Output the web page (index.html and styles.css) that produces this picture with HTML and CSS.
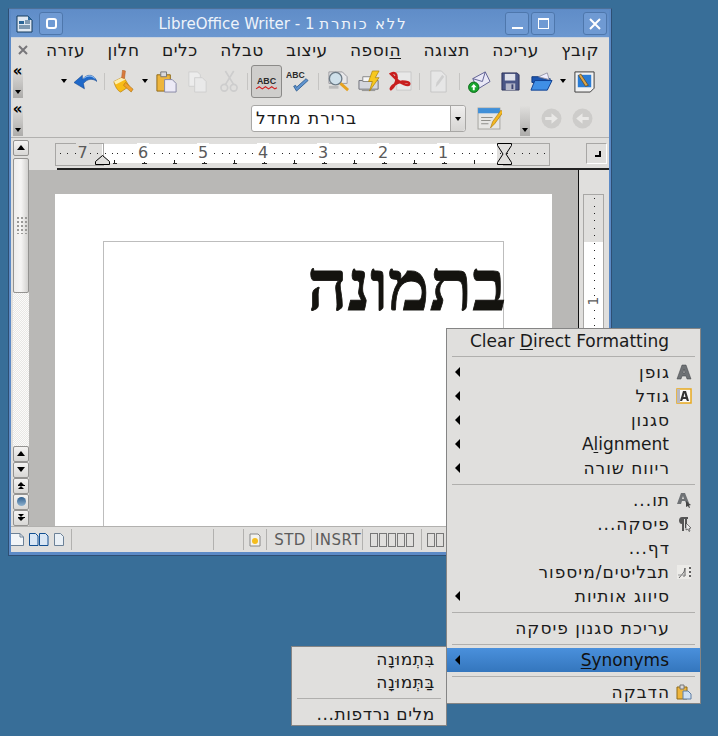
FILE: index.html
```html
<!DOCTYPE html>
<html lang="he">
<head>
  <meta charset="UTF-8" />
  <title>LibreOffice Writer</title>
  <link rel="stylesheet" href="styles.css">
</head>
<body>

<div class="window">
  <div class="titlebar">
    <svg class="app-icon" viewBox="0 0 17 18"><path d="M1 1h11l4 4v12H1z" fill="#dfe8f2" stroke="#143a5c"/><path d="M12 1l4 4h-4z" fill="#2d6a9f"/><path d="M3 6h5v3H3z" fill="#2a6597"/><path d="M9 6h5M3 11h11M3 13h11M9 8h5" stroke="#1f4a70"/></svg>
    <div class="tbtn tbtn-menu"><span class="ring"></span></div>
    <div class="title" dir="rtl"><span class="title-he">ללא כותרת</span> 1 - LibreOffice Writer</div>
    <div class="tbtn"><span class="min-glyph"></span></div>
    <div class="tbtn tbtn-max"><span class="max-glyph"></span></div>
    <div class="tbtn tbtn-close">
      <svg viewBox="0 0 12 12" width="12" height="12"><path d="M1 1l10 10M11 1L1 11" stroke="#fff" stroke-width="2"/></svg>
    </div>
  </div>

  <div class="body">
    <div class="menubar">
      <svg class="doc-close" viewBox="0 0 10 10" width="10" height="10"><path d="M1 1l8 8M9 1L1 9" stroke="#77767a" stroke-width="2"/></svg>
      <div class="menu-items" dir="rtl">
        <span>קובץ</span>
        <span>עריכה</span>
        <span>תצוגה</span>
        <span><u>ה</u>וספה</span>
        <span>עיצוב</span>
        <span>טבלה</span>
        <span>כלים</span>
        <span>חלון</span>
        <span>עזרה</span>
      </div>
    </div>

    <div class="toolbar">
      <div class="handle"><b>«</b><i></i></div>
      <div class="drop drop-first"></div>
      <div class="tool">
        <svg viewBox="0 0 22 18"><path d="M0 10L8 3v4C13 1 19 2 22 9c-4-3-9-3-13 2l1 5z" fill="#1f69c9" stroke="#0d3f8a" stroke-width=".5"/><path d="M9 6c4-3 8-3 11 0" fill="none" stroke="#8fbcf0"/></svg>
      </div>
      <div class="sep"></div>
      <div class="tool">
        <svg viewBox="0 0 22 24"><path d="M1 12l10-5 6 10-9 6c-3-1-6-6-7-11z" fill="#f8bc16" stroke="#b5790a" stroke-width=".7"/><path d="M1 12l10-5 2 3-10 5z" fill="#fdeeb0"/><path d="M10 0l3 1-1 8-3-1z" fill="#d97a3c" stroke="#a85a20" stroke-width=".5"/><path d="M13 13l8 7-2 3-8-7z" fill="#f2a02c" stroke="#a86f0a" stroke-width=".6"/></svg>
      </div>
      <div class="drop"></div>
      <div class="tool">
        <svg viewBox="0 0 22 24"><path d="M1 5h14v17H1z" fill="#eeb53c" stroke="#8f6a18"/><path d="M5 2h6v5H5z" fill="#d9d9dc" stroke="#777"/><path d="M9 10h8l4 4v9H9z" fill="#eceaf6" stroke="#8688a5"/></svg>
      </div>
      <div class="tool">
        <svg viewBox="0 0 22 24"><path d="M2 2h9l3 3v12H2z" fill="#ececec" stroke="#cfcfcf"/><path d="M8 8h8l4 4v11H8z" fill="#e9e9e9" stroke="#cfcfcf"/></svg>
      </div>
      <div class="tool">
        <svg viewBox="0 0 18 22"><path d="M14 1L6 14M6 1l8 13" stroke="#cdcdcd" stroke-width="1.600" fill="none"/><circle cx="5" cy="17" r="3.200" fill="none" stroke="#cdcdcd" stroke-width="1.600"/><circle cx="14" cy="17" r="3.200" fill="none" stroke="#cdcdcd" stroke-width="1.600"/></svg>
      </div>
      <div class="sep"></div>
      <div class="tool pressed">
        <svg viewBox="0 0 22 22"><text x="11" y="13" text-anchor="middle" class="abc-text">ABC</text><path d="M1 18l3-2 3 2 3-2 3 2 3-2 3 2 2-1" fill="none" stroke="#d32020"/></svg>
      </div>
      <div class="tool">
        <svg viewBox="0 0 24 24"><text x="0" y="8" class="abc-text abc-small">ABC</text><path d="M8 17l3 5L23 11l-2-2-10 9-1-2z" fill="#5f93cf" stroke="#1e5288" stroke-width=".8"/></svg>
      </div>
      <div class="sep sep-wide"></div>
      <div class="tool">
        <svg viewBox="0 0 24 24"><path d="M2 2h14l5 5v7H2z" fill="#e8e8ea" stroke="#9a9aa0"/><circle cx="9" cy="9" r="6.500" fill="#cfe0ea" stroke="#6d7b86" stroke-width="1.400"/><path d="M14 14l8 7" stroke="#e6a21f" stroke-width="3"/><path d="M2 18h10" stroke="#bbb" stroke-width="3"/></svg>
      </div>
      <div class="tool">
        <svg viewBox="0 0 24 24"><path d="M1 11h20v9H1z" fill="#d5d7de" stroke="#6f7078"/><path d="M5 7h10v5H5z" fill="#f6f6f6" stroke="#888"/><path d="M4 20h14v2H4z" fill="#999"/><path d="M15 1h7l-4 7h4L12 22l3-10h-4z" fill="#f7c81e" stroke="#a87c08" stroke-width=".7"/></svg>
      </div>
      <div class="tool">
        <svg viewBox="0 0 24 24"><path d="M8 2h15v19H8z" fill="#e8e8e8" stroke="#c8c8c8"/><path d="M2 4c4-2 6 0 6 4 0 5-3 10-6 12-1-1 4-7 12-8 4 0 8 1 7 3s-9-1-13-5C6 8 4 6 2 4z" fill="none" stroke="#c81e1e" stroke-width="2.600"/></svg>
      </div>
      <div class="sep"></div>
      <div class="tool">
        <svg viewBox="0 0 18 24"><path d="M1 1h11l5 5v17H1z" fill="#e6e6e6" stroke="#c6c6c6"/><path d="M6 18l1-5 6-8 2 2-6 8z" fill="#cfcfcf"/></svg>
      </div>
      <div class="sep sep-wide"></div>
      <div class="tool">
        <svg viewBox="0 0 24 24"><path d="M5 9L18 2l5 10-13 8z" fill="#e9e8f6" stroke="#5e5f92"/><path d="M5 9l10 3 3-10" fill="none" stroke="#5e5f92"/><circle cx="6" cy="18" r="5.400" fill="#18a52d" stroke="#0b6a19"/><path d="M6 14.500l3 3.500H7v3H5v-3H3z" fill="#fff"/></svg>
      </div>
      <div class="tool tool-save">
        <svg viewBox="0 0 20 20"><path d="M1 1h16l2 2v16H1z" fill="#4a5686" stroke="#2a3058"/><path d="M4 2h11v7H4z" fill="#dfe1ea"/><path d="M5 12h10v7H5z" fill="#b5b8c9"/><path d="M11 13h2v5h-2z" fill="#3c4470"/></svg>
      </div>
      <div class="tool">
        <svg viewBox="0 0 24 20"><path d="M2 5h8l2 2h9v4H2z" fill="#1c55b0" stroke="#103a80"/><path d="M9 5l9-4 2 7z" fill="#eef" stroke="#99a"/><path d="M1 19l4-10h18l-5 10z" fill="#3f8fe6" stroke="#103f90"/></svg>
      </div>
      <div class="drop"></div>
      <div class="tool">
        <svg viewBox="0 0 22 24"><path d="M1 2h20v17l-4 4H1z" fill="#f2f2f2" stroke="#3a3a3a"/><path d="M4 5h14v13H4z" fill="#2a7dd6"/><path d="M7 4l8 12-3 1-7-11z" fill="#d9a54b" stroke="#5e3f10" stroke-width=".7"/></svg>
      </div>
    </div>

    <div class="toolbar toolbar-second">
      <div class="handle"><b>«</b><i></i></div>
      <div class="combo">
        <div class="combo-text" dir="rtl">ברירת מחדל</div>
        <div class="combo-btn"></div>
      </div>
      <div class="tool tool-styles">
        <svg viewBox="0 0 24 24"><path d="M1 2h21v20H1z" fill="#e6e6e4" stroke="#a8a8a4"/><path d="M1 2h21v5H1z" fill="#3f8fd8"/><path d="M4 11h11M4 14h9M4 17h7" stroke="#8f8f8a"/><path d="M13 21l2-6 8-11 2 2-8 11z" fill="#f5b81f" stroke="#a0720a" stroke-width=".6"/></svg>
      </div>
      <div class="handle handle-plain"><i></i></div>
      <div class="tool tool-nav">
        <svg viewBox="0 0 20 20"><circle cx="10" cy="10" r="9.500" fill="#cdccca"/><path d="M4 8.500h6V5l6 5-6 5v-3.500H4z" fill="#e9e8e6"/></svg>
      </div>
      <div class="tool tool-nav">
        <svg viewBox="0 0 20 20"><circle cx="10" cy="10" r="9.500" fill="#cdccca"/><path d="M16 8.500h-6V5l-6 5 6 5v-3.500h6z" fill="#e9e8e6"/></svg>
      </div>
    </div>

    <div class="editor">
      <div class="vscroll">
        <div class="sbtn sbtn-top"><span class="up"></span></div>
        <div class="thumb"><span class="grip"></span></div>
        <div class="trough"></div>
        <div class="sbtn"><span class="up"></span></div>
        <div class="sbtn"><span class="down"></span></div>
        <div class="sbtn"><span class="up up-small"></span><span class="bar"></span><span class="up up-small"></span></div>
        <div class="sbtn"><span class="ball"></span></div>
        <div class="sbtn"><span class="down down-small"></span><span class="bar"></span><span class="down down-small"></span></div>
      </div>

      <div class="main">
        <div class="ruler-row">
          <div class="ruler">
            <div class="ruler-cell"><span class="ruler-num ruler-num-off">7</span></div>
            <div class="ruler-cell"><span class="ruler-num">6</span></div>
            <div class="ruler-cell"><span class="ruler-num">5</span></div>
            <div class="ruler-cell"><span class="ruler-num">4</span></div>
            <div class="ruler-cell"><span class="ruler-num">3</span></div>
            <div class="ruler-cell"><span class="ruler-num">2</span></div>
            <div class="ruler-cell"><span class="ruler-num">1</span></div>
            <div class="ruler-cell ruler-cell-end"></div>
            <svg class="tab-left" viewBox="0 0 15 10" width="15" height="10"><path d="M7.500.5l7 6v3H.5v-3z" fill="#e0dfdd" stroke="#000"/></svg>
            <svg class="tab-right" viewBox="0 0 15 22" width="15" height="22"><path d="M.5.5h14v2L9 11l5.500 8.500v2H.5v-2L6 11 .5 2.500z" fill="#e0dfdd" stroke="#000"/></svg>
          </div>
          <div class="corner"><span></span></div>
        </div>
        <div class="work-row">
          <div class="workspace">
            <div class="page">
              <div class="frame">
                <div class="doc-text" dir="rtl">בתמונה</div>
              </div>
            </div>
          </div>
          <div class="vruler-panel">
            <div class="vruler">
              <span class="vruler-num">1</span>
            </div>
          </div>
        </div>
      </div>
    </div>

    <div class="statusbar">
      <div class="st st-pages">
        <svg viewBox="0 0 13 13" width="13" height="13"><path d="M0 .5h9l3.500 3.500v8.500H0" fill="#f2f5f8" stroke="#6c8197"/><path d="M9 .5V4h3.500" fill="none" stroke="#6c8197"/></svg>
        <svg viewBox="0 0 20 13" width="20" height="13"><path d="M.5.5h6L9 3v9.500H.5zM10.500.5h6L19 3v9.500h-8.500z" fill="#d9e6f4" stroke="#124f91"/></svg>
        <svg viewBox="0 0 10 13" width="10" height="13"><path d="M.5.500h6L9.500 3.500v9H.5z" fill="#eaf0f6" stroke="#6c8197"/></svg>
      </div>
      <div class="st st-wide"></div>
      <div class="st st-30"></div>
      <div class="st st-23">
        <svg viewBox="0 0 12 14" width="12" height="14"><path d="M1 1h8l2 2v10H1z" fill="#f3f3f0" stroke="#888"/><circle cx="6" cy="8" r="3" fill="#f4bd1e"/></svg>
      </div>
      <div class="st st-std">STD</div>
      <div class="st st-insrt">INSRT</div>
      <div class="st st-tofu"><i></i><i></i><i></i><i></i><i></i></div>
      <div class="st st-last st-tofu"><i></i><i></i></div>
    </div>
  </div>
</div>

<div class="popup popup-main" dir="rtl">
  <div class="item item-first" dir="ltr"><span class="item-label">Clear <u>D</u>irect Formatting</span></div>
  <div class="rule"></div>
  <div class="item has-sub">
    <span class="item-icon"><svg viewBox="0 0 16 16"><path d="M6 1h4l5 14h-4l-1-3H6l-1 3H1zM8 5l-1 4h2z" fill="#6f7275" stroke="#3e4144" stroke-width=".5"/></svg></span>
    <span class="item-label">גופן</span>
  </div>
  <div class="item has-sub">
    <span class="item-icon"><svg viewBox="0 0 16 16"><path d="M1 1h14v14H1z" fill="#fafafa" stroke="#e8a91e" stroke-width="1.500"/><path d="M1 1h3v14H1z" fill="#b9b9c2"/><path d="M7 3h3l3 10h-2l-1-2H7l-1 2H4zM8.500 5L7.500 9h2z" fill="#333"/></svg></span>
    <span class="item-label">גודל</span>
  </div>
  <div class="item has-sub"><span class="item-icon"></span><span class="item-label">סגנון</span></div>
  <div class="item has-sub" dir="ltr"><span class="item-label">A<u>l</u>ignment</span></div>
  <div class="item has-sub"><span class="item-icon"></span><span class="item-label">ריווח שורה</span></div>
  <div class="rule"></div>
  <div class="item">
    <span class="item-icon"><svg viewBox="0 0 16 16"><path d="M5 1h4l4 10h-3l-1-2H6l-1 3H1zM7 4L6 7h2z" fill="#6f7275"/><path d="M10 9l5 4-2 .5 1 2-1 .5-1-2-2 1z" fill="#444"/></svg></span>
    <span class="item-label">תו...</span>
  </div>
  <div class="item">
    <span class="item-icon"><svg viewBox="0 0 16 16"><path d="M12 1H6C2 1 2 8 6 8v7h2V3h1v9h2V3h1z" fill="#555"/><path d="M10 7l5 5-2 .5 1 2.500-1 .5-1-2.500-2 1z" fill="#eee" stroke="#333" stroke-width=".6"/></svg></span>
    <span class="item-label">פיסקה...</span>
  </div>
  <div class="item"><span class="item-icon"></span><span class="item-label">דף...</span></div>
  <div class="item">
    <span class="item-icon"><svg viewBox="0 0 16 16"><path d="M1 1h14v14H1z" fill="#ecebe8"/><path d="M13 4h2M13 8h2M13 12h2" stroke="#333" stroke-width="1.500"/><path d="M3 14l5-6 1-4v8H7" fill="none" stroke="#666"/><path d="M2 11h8" stroke="#999"/></svg></span>
    <span class="item-label">תבליטים/מיספור</span>
  </div>
  <div class="item has-sub"><span class="item-icon"></span><span class="item-label">סיווג אותיות</span></div>
  <div class="rule"></div>
  <div class="item"><span class="item-icon"></span><span class="item-label">עריכת סגנון פיסקה</span></div>
  <div class="rule"></div>
  <div class="item has-sub item-active" dir="ltr"><span class="item-label"><u>S</u>ynonyms</span></div>
  <div class="rule"></div>
  <div class="item item-last">
    <span class="item-icon"><svg viewBox="0 0 16 16"><path d="M1 3h10v12H1z" fill="#eeb53c" stroke="#8f6a18"/><path d="M4 1h4v4H4z" fill="#d9d9dc" stroke="#777"/><path d="M7 7h5l3 3v5H7z" fill="#cfe0f2" stroke="#5f7fa5"/></svg></span>
    <span class="item-label">הדבקה</span>
  </div>
</div>

<div class="popup popup-sub" dir="rtl">
  <div class="item item-first"><span class="item-label">בִּתְמוּנָה</span></div>
  <div class="item"><span class="item-label">בַּתְּמוּנָה</span></div>
  <div class="rule"></div>
  <div class="item item-last"><span class="item-label">מלים נרדפות...</span></div>
</div>

</body>
</html>
```

FILE: styles.css
```css
* {
  box-sizing: border-box;
}
body {
  margin: 0;
  width: 718px;
  height: 736px;
  overflow: hidden;
  position: relative;
  background-color: #386e98;
  font-family: "DejaVu Sans", sans-serif;
  color: #1a1a1a;
}
u {
  text-underline-offset: 2px;
}

/* window */
.window {
  position: absolute;
  left: 8px;
  top: 8px;
  width: 604px;
  height: 548px;
  background-color: #5c8ac6;
  border: 1px solid #2e4f74;
  border-top-color: #4d7097;
  padding: 1px 2px 3px 2px;
  display: flex;
  flex-direction: column;
}
.titlebar {
  height: 27px;
  flex: none;
  display: flex;
  align-items: center;
  background: linear-gradient(#608dc8, #6b97d0);
  padding: 0 2px 0 5px;
}
.app-icon {
  width: 17px;
  height: 18px;
  margin-right: 6px;
  flex: none;
}
.tbtn {
  width: 24px;
  height: 23px;
  margin-right: 2px;
  border: 1px solid #4e77ac;
  border-radius: 3px;
  background-color: #6f9ad3;
  display: flex;
  align-items: center;
  justify-content: center;
  flex: none;
}
.tbtn-max {
  margin-right: 28px;
}
.tbtn-close {
  margin-right: 0;
}
.ring {
  width: 11px;
  height: 11px;
  border: 2px solid #fff;
  border-radius: 3px;
}
.min-glyph {
  width: 11px;
  height: 2px;
  background-color: #fff;
  margin-top: 9px;
}
.max-glyph {
  width: 11px;
  height: 11px;
  border: 1px solid #fff;
  border-top-width: 2px;
}
.title {
  flex: 1;
  text-align: center;
  font-size: 15px;
  color: #eef3fa;
  padding-right: 4px;
}
.title-he {
  letter-spacing: 1.800px;
}
.body {
  flex: 1;
  min-height: 0;
  background-color: #e0dfdd;
  display: flex;
  flex-direction: column;
  border-top: 1px solid #c9d3df;
}

/* menu bar */
.menubar {
  height: 24px;
  flex: none;
  display: flex;
  align-items: center;
  padding-left: 7px;
}
.doc-close {
  flex: none;
}
.menu-items {
  flex: 1;
  display: flex;
  justify-content: space-between;
  font-size: 17px;
  padding-right: 10px;
  padding-left: 18px;
  letter-spacing: .5px;
}

/* toolbars */
.toolbar {
  height: 38px;
  flex: none;
  display: flex;
  align-items: center;
  padding-left: 2px;
}
.toolbar-second {
  height: 37px;
}
.handle {
  width: 10px;
  height: 34px;
  flex: none;
  background: linear-gradient(#e0dfdd 10%, #adacaa);
  position: relative;
  text-align: center;
  color: #000;
}
.handle b {
  display: block;
  font-size: 15px;
  line-height: 10px;
  margin-top: 2px;
  margin-left: -1px;
}
.handle i {
  position: absolute;
  left: 2px;
  bottom: 4px;
  border-top: 4px solid #000;
  border-left: 3px solid transparent;
  border-right: 3px solid transparent;
}
.drop {
  width: 12px;
  flex: none;
  height: 4px;
  position: relative;
}
.drop::after {
  content: "";
  position: absolute;
  left: 3px;
  top: 0;
  border-top: 4px solid #000;
  border-left: 3px solid transparent;
  border-right: 3px solid transparent;
}
.drop-first {
  margin-left: 35px;
}
.tool {
  width: 31px;
  height: 33px;
  flex: none;
  display: flex;
  align-items: center;
  justify-content: center;
}
.tool svg {
  width: 23px;
  height: 23px;
}
.tool-save svg {
  width: 19px;
  height: 19px;
}
.pressed {
  background-color: #cfcecc;
  border: 1px solid #8b8a88;
  border-radius: 3px;
}
.abc-text {
  font-family: "Liberation Sans", sans-serif;
  font-size: 8.500px;
  font-weight: bold;
  fill: #2b2b2b;
}
.abc-small {
  font-size: 9px;
}
.sep {
  width: 7px;
  flex: none;
  height: 17px;
  background: linear-gradient(#c5c4c2, #c5c4c2) center / 1px 100% no-repeat;
}
.sep-wide {
  width: 10px;
}
.combo {
  width: 215px;
  height: 27px;
  flex: none;
  margin-left: 228px;
  display: flex;
  background-color: #fff;
  border: 1px solid #a8a7a5;
  border-radius: 3px;
}
.combo-text {
  flex: 1;
  font-size: 17px;
  line-height: 25px;
  text-align: left;
  padding-left: 4px;
  letter-spacing: 1px;
}
.combo-btn {
  width: 15px;
  background: linear-gradient(#f0efee, #d6d5d3);
  border-left: 1px solid #a8a7a5;
  border-radius: 0 3px 3px 0;
  position: relative;
}
.combo-btn::after {
  content: "";
  position: absolute;
  left: 4px;
  top: 11px;
  border-top: 4px solid #000;
  border-left: 3px solid transparent;
  border-right: 3px solid transparent;
}
.tool-styles {
  margin-left: 8px;
}
.tool-styles svg {
  width: 25px;
  height: 25px;
}
.handle-plain {
  margin-left: 15px;
}
.tool-nav svg {
  width: 21px;
  height: 21px;
}
.handle-plain + .tool-nav {
  margin-left: 6px;
}

/* editor area */
.editor {
  flex: 1;
  min-height: 0;
  display: flex;
  border-top: 1px solid #b2b1af;
}
.vscroll {
  width: 18px;
  flex: none;
  padding: 2px 0 0 2px;
  display: flex;
  flex-direction: column;
}
.sbtn {
  width: 16px;
  height: 15.500px;
  flex: none;
  background: linear-gradient(#f4f3f2, #d8d7d5);
  border: 1px solid #949391;
  border-radius: 2px;
  display: flex;
  flex-direction: column;
  align-items: center;
  justify-content: center;
  margin-bottom: .5px;
}
.sbtn-top {
  margin-bottom: 2px;
}
.thumb {
  height: 135px;
  flex: none;
  width: 16px;
  background: linear-gradient(90deg, #eeedec, #f6f5f4 50%, #d2d1cf);
  border: 1px solid #949391;
  border-radius: 2px;
  display: flex;
  align-items: center;
  justify-content: center;
}
.grip {
  width: 11px;
  height: 18px;
  background-image: radial-gradient(circle, #9a9997 0 1px, transparent 1px);
  background-size: 4px 4px;
}
.trough {
  flex: 1;
  background: repeating-conic-gradient(#e8e7e5 0 25%, #fbfbfa 0 50%) 0 0 / 2px 2px;
}
.up {
  border-bottom: 5px solid #000;
  border-left: 4px solid transparent;
  border-right: 4px solid transparent;
}
.down {
  border-top: 5px solid #000;
  border-left: 4px solid transparent;
  border-right: 4px solid transparent;
}
.up-small {
  border-bottom-width: 3px;
  border-left-width: 3px;
  border-right-width: 3px;
}
.down-small {
  border-top-width: 3px;
  border-left-width: 3px;
  border-right-width: 3px;
}
.bar {
  width: 7px;
  height: 1px;
  background-color: #000;
}
.ball {
  width: 9px;
  height: 9px;
  border-radius: 50%;
  background: linear-gradient(#2f5f8f, #8fb2cf);
}
.main {
  flex: 1;
  min-width: 0;
  display: flex;
  flex-direction: column;
}
.ruler-row {
  height: 32px;
  flex: none;
  display: flex;
  padding: 5px 0 0 26px;
  background: linear-gradient(#222, #222) 28px bottom / 100% 2px no-repeat;
}
.ruler {
  width: 495px;
  height: 22px;
  flex: none;
  position: relative;
  display: flex;
  background:
    linear-gradient(#e0dfdd, #e0dfdd) 0 0 / 47px 100% no-repeat,
    linear-gradient(#e0dfdd, #e0dfdd) right 0 top 0 / 53px 100% no-repeat,
    linear-gradient(#fff, #fff) 0 1px / 100% 19px no-repeat,
    #e0dfdd;
}
.ruler::before {
  content: "";
  position: absolute;
  left: 0;
  top: 0;
  width: 47px;
  height: 21px;
  border: 1px solid #a8a7a5;
}
.ruler::after {
  content: "";
  position: absolute;
  right: 0;
  top: 0;
  width: 46px;
  height: 21px;
  border: 1px solid #a8a7a5;
  border-left: none;
}
.ruler-cell {
  width: 60px;
  height: 22px;
  flex: none;
  text-align: center;
  font-size: 16px;
  line-height: 20px;
  color: #5a5a5a;
  position: relative;
  z-index: 1;
  background:
    repeating-linear-gradient(90deg, #222 0 1px, transparent 1px 7.500px) 4px 10px / 100% 1px no-repeat,
    linear-gradient(#222, #222) 1px 17px / 1px 4px no-repeat,
    linear-gradient(#222, #222) 31px 17px / 1px 4px no-repeat,
    linear-gradient(#222, #222) 0 20px / 4px 1px no-repeat,
    linear-gradient(#222, #222) 29px 20px / 5px 1px no-repeat;
}
.ruler-cell:first-child {
  width: 58px;
  background:
    repeating-linear-gradient(90deg, #222 0 1px, transparent 1px 7.500px) 5px 10px / 100% 1px no-repeat;
  text-indent: -3px;
}
.ruler-cell-end {
  width: 77px;
  background:
    repeating-linear-gradient(90deg, #222 0 1px, transparent 1px 7.500px) 4px 10px / 100% 1px no-repeat,
    linear-gradient(#222, #222) 1px 17px / 1px 4px no-repeat;
}
.ruler-num {
  background-color: #fff;
  padding: 0 1px;
}
.ruler-num-off {
  background-color: #e0dfdd;
}
.tab-left {
  position: absolute;
  left: 40px;
  top: 12px;
  z-index: 2;
}
.tab-right {
  position: absolute;
  left: 442px;
  top: 0;
  z-index: 2;
}
.corner {
  width: 21px;
  height: 21px;
  margin-left: 36px;
  flex: none;
  border: 1px solid #a8a7a5;
  border-right-color: #fff;
  border-bottom-color: #fff;
  position: relative;
}
.corner span {
  position: absolute;
  left: 8px;
  top: 7px;
  width: 6px;
  height: 6px;
  border-right: 2px solid #000;
  border-bottom: 2px solid #000;
}
.work-row {
  flex: 1;
  min-height: 0;
  display: flex;
}
.workspace {
  width: 550px;
  flex: none;
  background-color: #b9b8b6;
  padding: 24px 0 0 26px;
  overflow: hidden;
  border-right: 1px solid #111;
}
.page {
  width: 497px;
  height: 100%;
  background-color: #fff;
  padding: 47px 0 0 48px;
}
.frame {
  width: 401px;
  height: 400px;
  border: 1px solid #bdbdbd;
}
.doc-text {
  font-family: "Liberation Serif", serif;
  font-weight: bold;
  font-size: 70px;
  line-height: 70px;
  color: #14130f;
  -webkit-text-stroke: .8px #14130f;
  padding-top: 10px;
  margin-right: -3px;
}
.vruler-panel {
  flex: 1;
  padding: 24px 5px 0 4px;
}
.vruler {
  width: 21px;
  height: 400px;
  position: relative;
  background:
    repeating-linear-gradient(#222 0 1px, transparent 1px 7.500px) 10px 3px / 1px 100% no-repeat,
    linear-gradient(#e0dfdd, #e0dfdd) 0 0 / 100% 47px no-repeat,
    #fff;
  border: 1px solid #a8a7a5;
  border-bottom: none;
}
.vruler-num {
  position: absolute;
  left: 5px;
  top: 99px;
  font-size: 14px;
  line-height: 14px;
  color: #5a5a5a;
  transform: rotate(-90deg);
  background-color: #fff;
}

/* status bar */
.statusbar {
  height: 26px;
  flex: none;
  display: flex;
  align-items: center;
  border-top: 1px solid #b2b1af;
  font-size: 15px;
  color: #5c5c5c;
  letter-spacing: .5px;
}
.st {
  height: 21px;
  flex: none;
  border-right: 1px solid #b2b1af;
  display: flex;
  align-items: center;
  justify-content: center;
}
.st-pages {
  width: 61px;
  justify-content: flex-start;
  gap: 5px;
}
.st-wide {
  width: 142px;
}
.st-30 {
  width: 30px;
}
.st-23 {
  width: 23px;
}
.st-std {
  width: 45px;
  padding-left: 2px;
}
.st-insrt {
  width: 51px;
  padding-left: 2px;
}
.st-tofu {
  width: 59px;
  gap: 1px;
}
.st-tofu i {
  width: 8px;
  height: 14px;
  border: 1px solid #777;
}
.st-last {
  border: none;
  justify-content: flex-start;
  padding-left: 5px;
}

/* popup menus */
.popup {
  position: absolute;
  background-color: #e0dfdd;
  border: 1px solid #858585;
  font-size: 17px;
  letter-spacing: 1px;
}
.popup-main {
  left: 446px;
  top: 328px;
  width: 255px;
  height: 376px;
  z-index: 3;
}
.popup-sub {
  left: 291px;
  top: 646px;
  width: 156px;
  height: 80px;
  z-index: 4;
  letter-spacing: .6px;
}
.item {
  height: 24px;
  display: flex;
  align-items: center;
  position: relative;
  padding: 0 8px;
  white-space: nowrap;
}
.item-first,
.item-last {
  height: 23px;
}
.item-icon {
  width: 16px;
  height: 16px;
  flex: none;
  margin-left: 6px;
}
.item-icon svg {
  width: 16px;
  height: 16px;
  display: block;
}
.popup-sub .item {
  padding: 0 11px;
}
.popup-main .item[dir="ltr"] {
  justify-content: flex-end;
  padding-right: 31px;
  letter-spacing: 0;
}
.has-sub::after {
  content: "";
  position: absolute;
  left: 8px;
  top: 7px;
  border-right: 5px solid #000;
  border-top: 5px solid transparent;
  border-bottom: 5px solid transparent;
}
.item-active {
  background: linear-gradient(#4a90dc, #3476bd);
  color: #111;
}
.rule {
  height: 8px;
  margin: 0 5px;
  background: linear-gradient(#b0afad, #b0afad) center / 100% 1px no-repeat;
}
```
